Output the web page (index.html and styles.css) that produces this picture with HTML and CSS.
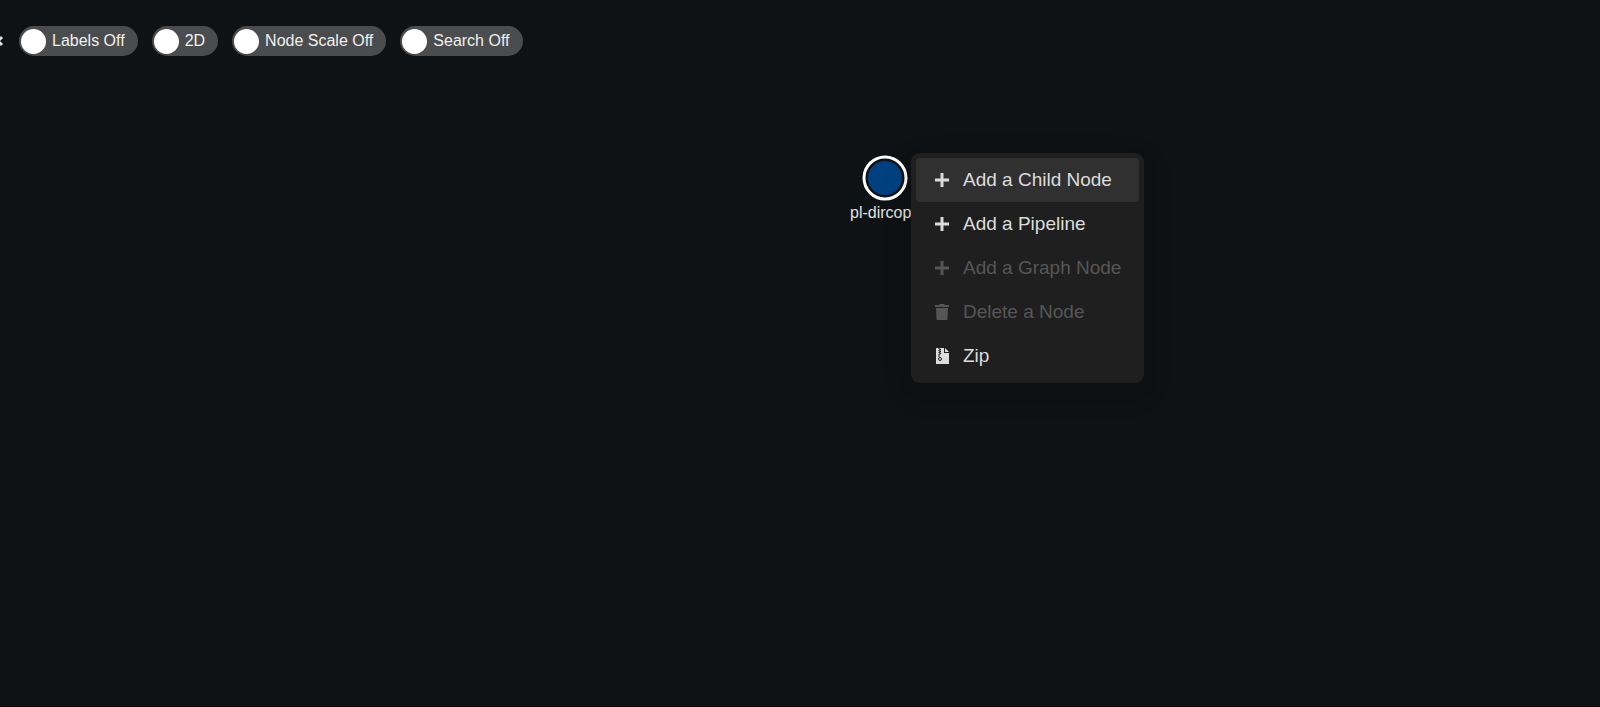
FILE: index.html
```
<!DOCTYPE html>
<html lang="en">
<head>
    <meta charset="UTF-8">
    <title>Feed Graph</title>
    <link rel="stylesheet" href="styles.css">
</head>
<body>
    <header class="toolbar">
        <button type="button" class="close-btn" aria-label="Close">
            <svg width="12" height="12" viewBox="0 0 12 12"><path d="M2 2l8 8M10 2l-8 8"/></svg>
        </button>
        <button type="button" class="switch" role="switch" aria-checked="false"><span class="switch-handle"></span>Labels Off</button>
        <button type="button" class="switch" role="switch" aria-checked="false"><span class="switch-handle"></span>2D</button>
        <button type="button" class="switch" role="switch" aria-checked="false"><span class="switch-handle"></span>Node Scale Off</button>
        <button type="button" class="switch" role="switch" aria-checked="false"><span class="switch-handle"></span>Search Off</button>
    </header>

    <main class="graph">
        <!-- graph node, placed on the canvas -->
        <div class="node">
            <svg width="46" height="46" viewBox="0 0 46 46">
                <circle class="node-ring" cx="23" cy="23" r="21"/>
                <circle class="node-fill" cx="23" cy="23" r="17"/>
            </svg>
            <span class="node-label">pl-dircopy</span>
        </div>

        <div class="menu" role="menu">
            <button type="button" class="menu-item active" role="menuitem">
                <svg class="icon" viewBox="0 0 16 16"><path d="M8 1v14M1 8h14" class="icon-plus"/></svg>
                Add a Child Node
            </button>
            <button type="button" class="menu-item" role="menuitem">
                <svg class="icon" viewBox="0 0 16 16"><path d="M8 1v14M1 8h14" class="icon-plus"/></svg>
                Add a Pipeline
            </button>
            <button type="button" class="menu-item" role="menuitem" disabled>
                <svg class="icon" viewBox="0 0 16 16"><path d="M8 1v14M1 8h14" class="icon-plus"/></svg>
                Add a Graph Node
            </button>
            <button type="button" class="menu-item" role="menuitem" disabled>
                <svg class="icon" viewBox="0 0 16 16"><path d="M1 1h4l1-1h4l1 1h4v2H1zM2 4h12l-.5 11q0 1-1 1h-9q-1 0-1-1z"/></svg>
                Delete a Node
            </button>
            <button type="button" class="menu-item" role="menuitem">
                <svg class="icon" viewBox="0 0 16 16">
                    <path d="M2 0h8v5h5v11H2zM11 0l4 4h-4z"/>
                    <path class="zip-line" d="M5 0v1h1.500v1H5v1h1.500v1H5v1h1.500v1H5v3"/>
                    <circle class="zip-line" cx="6" cy="11" r="1.500"/>
                </svg>
                Zip
            </button>
        </div>
    </main>
</body>
</html>
```
FILE: styles.css
```
* {
    box-sizing: border-box;
}
body {
    margin: 0;
    min-height: 100vh;
    display: flex;
    flex-direction: column;
    background-color: #0f1214;
    border-bottom: 1px solid #050003;
    color: #e0e0e0;
    font-family: "Liberation Sans", Arial, sans-serif;
}
button {
    border: none;
    font-family: inherit;
    cursor: pointer;
}
.toolbar {
    display: flex;
    align-items: center;
    gap: 14px;
    padding-top: 26px;
}
.close-btn {
    display: flex;
    justify-content: flex-end;
    width: 5px;
    padding: 0 1px 0 0;
    overflow: hidden;
    background: none;
}
.close-btn svg {
    flex-shrink: 0;
    fill: none;
    stroke: #e0e0e0;
    stroke-width: 3;
}
.switch {
    display: flex;
    align-items: center;
    gap: 6px;
    height: 30px;
    padding: 0 13px 0 2px;
    border-radius: 15px;
    background-color: #4b4c4d;
    color: #f0f0f0;
    font-size: 16px;
}
.switch-handle {
    width: 25px;
    height: 25px;
    border-radius: 50%;
    background-color: #fff;
}
.graph {
    position: relative;
    flex: 1;
}
.node {
    position: absolute;
    left: 850px;
    top: 99px;
    display: flex;
    flex-direction: column;
    align-items: center;
    gap: 2px;
    font-size: 16px;
    line-height: 20px;
}
.node svg {
    display: block;
}
.node-ring {
    fill: none;
    stroke: #fff;
    stroke-width: 3;
}
.node-fill {
    fill: #004080;
}
.menu {
    position: absolute;
    left: 911px;
    top: 97px;
    display: flex;
    flex-direction: column;
    padding: 5px;
    border-radius: 9px;
    background-color: #1f1f1f;
    box-shadow: 0 6px 16px rgba(0, 0, 0, 0.1), 0 9px 28px 8px rgba(0, 0, 0, 0.05);
}
.menu-item {
    display: flex;
    align-items: center;
    gap: 13px;
    height: 44px;
    padding: 0 18px;
    border-radius: 4px;
    background: none;
    color: #dcdcdc;
    font-size: 19px;
    text-align: left;
}
.menu-item.active,
.menu-item:hover:enabled {
    background-color: #303030;
}
.menu-item:disabled {
    color: #565656;
    cursor: not-allowed;
}
.icon {
    width: 16px;
    height: 16px;
    fill: currentColor;
}
.icon-plus {
    stroke: currentColor;
    stroke-width: 3;
}
.zip-line {
    fill: none;
    stroke: #1f1f1f;
    stroke-width: 1;
}
```
